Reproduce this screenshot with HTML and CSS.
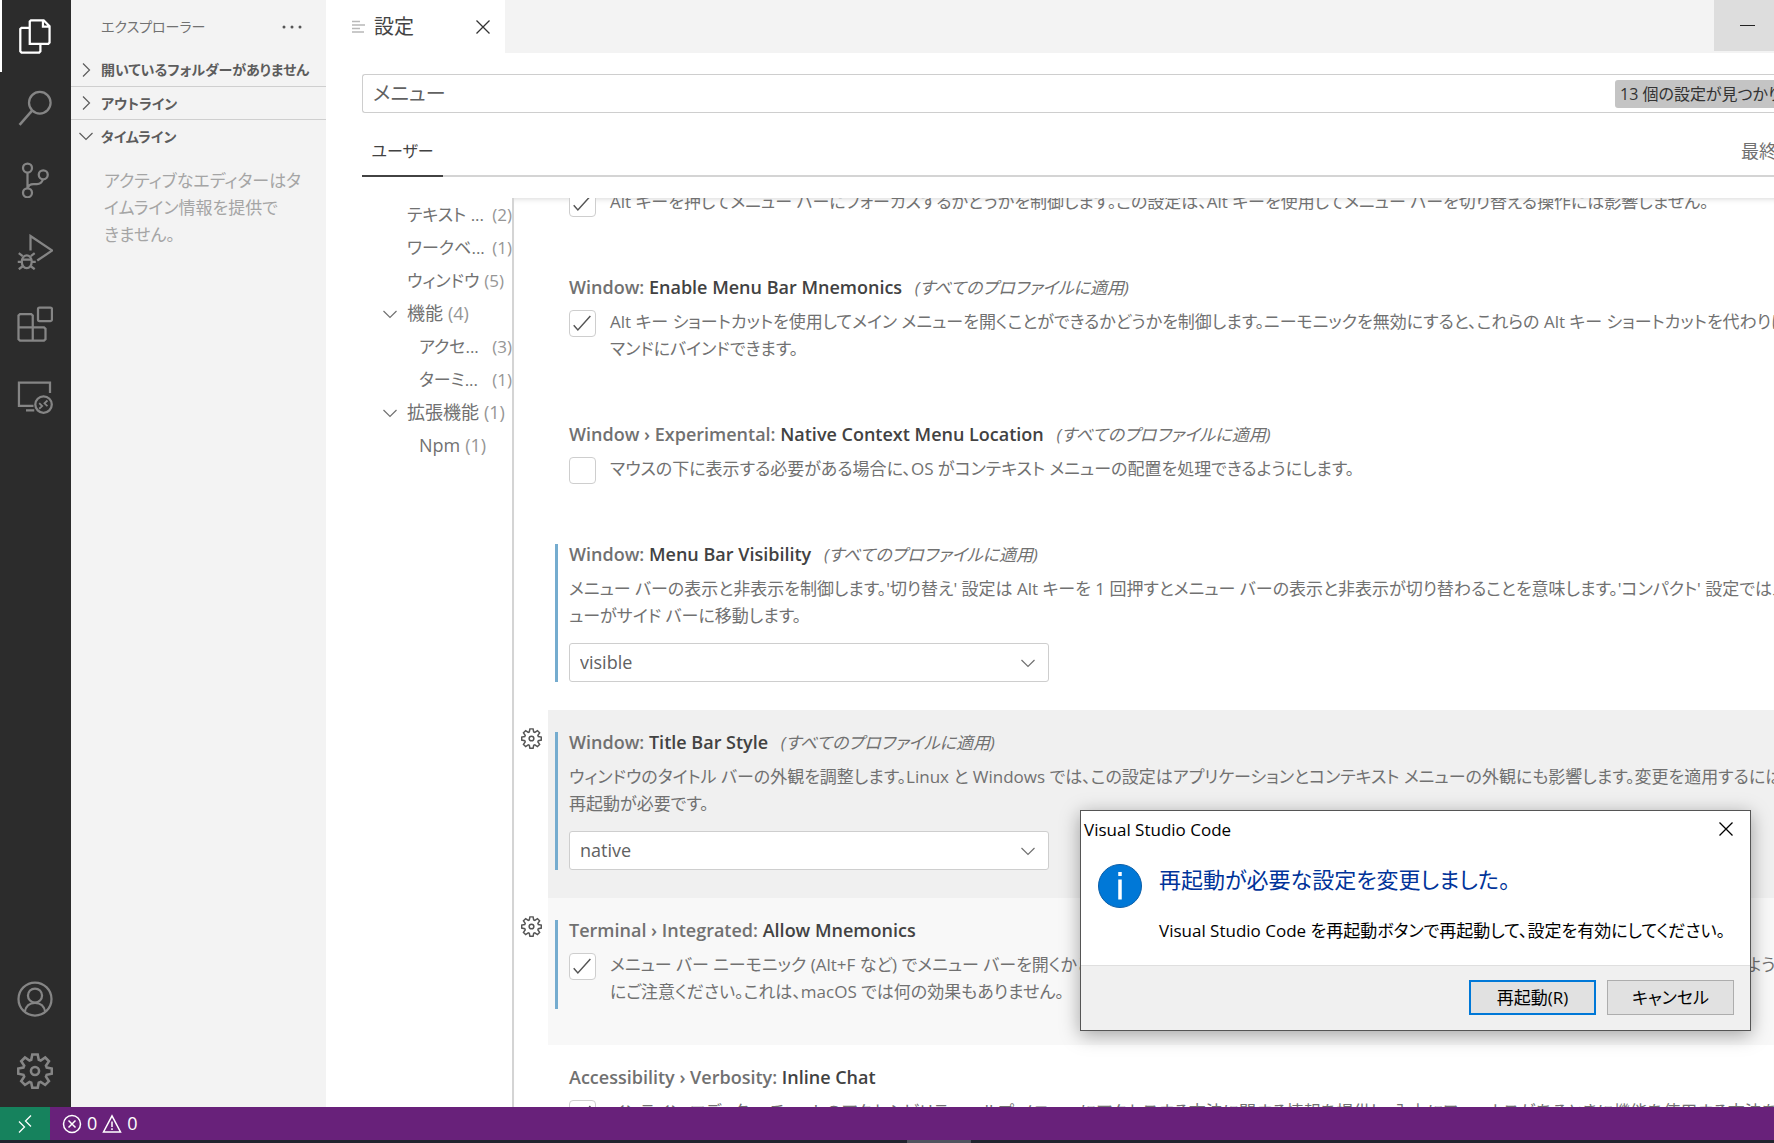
FILE: index.html
```html
<!DOCTYPE html>
<html lang="ja">
<head>
	<title>設定 - Visual Studio Code</title>
	<meta charset="UTF-8">
	<link rel="stylesheet" href="styles.css">
</head>
<body>
	<!-- 共通アイコン -->
	<svg class="defs">
		<symbol id="down" viewBox="0 0 16 16"><path d="M1.5 5 8 11.5 14.5 5" fill="none" stroke="currentColor" stroke-width="1.2"/></symbol>
		<symbol id="right" viewBox="0 0 16 16"><path d="M5 1.5 11.5 8 5 14.5" fill="none" stroke="currentColor" stroke-width="1.2"/></symbol>
		<symbol id="close" viewBox="0 0 16 16"><path d="M1.5 1.5 14.5 14.5M14.5 1.5 1.5 14.5" fill="none" stroke="currentColor" stroke-width="1.3"/></symbol>
		<symbol id="gear" viewBox="0 0 24 24"><path d="M10.2 1h3.6l.7 3.5 1.3.5 3-2 2.5 2.5-2 3 .5 1.2 3.4.7v3.4l-3.4.7-.5 1.3 2 3-2.5 2.5-3-2-1.3.5-.7 3.4h-3.6l-.7-3.4-1.2-.5-3 2-2.5-2.5 2-3-.5-1.3-3.5-.7v-3.4l3.5-.7.5-1.2-2-3 2.5-2.5 3 2 1.2-.5z" fill="none" stroke="currentColor" stroke-width="1.7"/><circle cx="12" cy="12" r="2.7" fill="none" stroke="currentColor" stroke-width="1.7"/></symbol>
	</svg>
	<div class="window">
		<div class="main">
			<nav class="activity">
				<button class="act on" aria-label="エクスプローラー"><svg viewBox="0 0 24 24"><path d="M8.5 17.2V2.3L9.3 1.5h8.5L21.7 5.4v11l-.8.8H9.3zM17.3 1.5v4.3h4.4M8.5 6.5H3l-.8.8v14.9l.8.8h11.8l.8-.8v-5" fill="none" stroke="currentColor" stroke-width="1.5"/></svg></button>
				<button class="act" aria-label="検索"><svg viewBox="0 0 24 24"><circle cx="15.2" cy="8.5" r="7.2" fill="none" stroke="currentColor" stroke-width="1.5"/><path d="M10.2 13.6 1.7 23.3" fill="none" stroke="currentColor" stroke-width="1.7"/></svg></button>
				<button class="act" aria-label="ソース管理"><svg viewBox="0 0 24 24"><g fill="none" stroke="currentColor" stroke-width="1.5"><circle cx="7" cy="4" r="3"/><circle cx="17.5" cy="8.5" r="3"/><circle cx="7" cy="20.5" r="3"/><path d="M7 7v10.5M17.3 11.5c-.6 2-2 3.2-4 3.2H11c-2 0-3.5 1-4 2.8"/></g></svg></button>
				<button class="act" aria-label="実行とデバッグ"><svg viewBox="0 0 24 24"><g fill="none" stroke="currentColor" stroke-width="1.5"><path d="M9 11V1.3L23.5 11 13.5 17.7"/><ellipse cx="6.5" cy="18.5" rx="3.3" ry="4.3"/><path d="M3.5 17h6M3.8 14.8 1.2 12.8M9.2 14.8l2.6-2M.5 18.5h2.7M9.8 18.5h2.7M3.8 21.5l-2.6 2M9.2 21.5l2.6 2"/></g></svg></button>
				<button class="act" aria-label="拡張機能"><svg viewBox="0 0 24 24"><g fill="none" stroke="currentColor" stroke-width="1.5"><rect x="14" y="1" width="9.3" height="9" rx="1"/><path d="M10.5 14.3V6.3l-1-.9H2l-1 .9v15.8l1 .9h16l1-.9V15.2l-1-.9H1M10.5 14.3V23"/></g></svg></button>
				<button class="act" aria-label="リモート エクスプローラー"><svg viewBox="0 0 24 24"><g fill="none" stroke="currentColor" stroke-width="1.5"><path d="M22 10V3H1.3v15.5H11M6 21.5h5.5"/><circle cx="17.7" cy="17.7" r="5.5"/><path d="M14.8 16.8l2 1.9-2 1.8M20.3 15l-2 1.9 2 1.9" stroke-width="1.2"/></g></svg></button>
				<button class="act bottom" aria-label="アカウント"><svg viewBox="0 0 24 24"><g fill="none" stroke="currentColor" stroke-width="1.5"><circle cx="12" cy="12" r="11"/><circle cx="12" cy="9.7" r="4.7"/><path d="M5.2 20.5c.6-3.8 3.3-6 6.8-6s6.2 2.2 6.8 6"/></g></svg></button>
				<button class="act" aria-label="管理"><svg><use href="#gear"/></svg></button>
			</nav>
			<aside class="sidebar">
				<div class="side-title"><span>エクスプローラー</span><button aria-label="その他の操作"><svg viewBox="0 0 20 4"><circle cx="2" cy="2" r="1.5"/><circle cx="10" cy="2" r="1.5"/><circle cx="18" cy="2" r="1.5"/></svg></button></div>
				<button class="pane"><svg><use href="#right"/></svg>開いているフォルダーがありません</button>
				<button class="pane"><svg><use href="#right"/></svg>アウトライン</button>
				<button class="pane"><svg><use href="#down"/></svg>タイムライン</button>
				<p>アクティブなエディターはタ<br>イムライン情報を提供で<br>きません。</p>
			</aside>
			<main class="editor">
				<div class="tabs">
					<div class="tab">
						<svg class="tab-icon" viewBox="0 0 13 14"><path d="M0 1.5h8M0 5h13M0 8.5h8M0 12h12" stroke="#b8b8b8" stroke-width="1.5"/></svg>
						<span>設定</span>
						<button aria-label="閉じる"><svg><use href="#close"/></svg></button>
					</div>
					<button class="minimize" aria-label="最小化"></button>
				</div>
				<div class="search">
					<input type="text" value="メニュー" aria-label="設定の検索">
					<span class="found">13 個の設定が見つかりました</span>
				</div>
				<div class="scope">
					<button>ユーザー</button>
					<span>最終同期</span>
				</div>
				<div class="body">
					<ul class="toc">
						<li class="cut"><span>テキスト ...</span><i>(2)</i></li>
						<li class="cut"><span>ワークベ...</span><i>(1)</i></li>
						<li class="kana">ウィンドウ<i>(5)</i></li>
						<li><svg><use href="#down"/></svg>機能<i>(4)</i></li>
						<li class="sub cut"><span>アクセ...</span><i>(3)</i></li>
						<li class="sub cut"><span>ターミ...</span><i>(1)</i></li>
						<li><svg><use href="#down"/></svg>拡張機能<i>(1)</i></li>
						<li class="sub">Npm<i>(1)</i></li>
					</ul>
					<div class="list">
						<section class="setting">
							<div class="gear"></div>
							<div class="item"><div class="content">
								<h3>Window: <b>Custom Menu Bar Alt Focus</b> <em>(すべてのプロファイルに適用)</em></h3>
								<div class="check"><input type="checkbox" id="c1" checked><label for="c1">Alt キーを押してメニュー バーにフォーカスするかどうかを制御します。この設定は、Alt キーを使用してメニュー バーを切り替える操作には影響しません。</label></div>
							</div></div>
						</section>
						<section class="setting">
							<div class="gear"></div>
							<div class="item"><div class="content">
								<h3>Window: <b>Enable Menu Bar Mnemonics</b> <em>(すべてのプロファイルに適用)</em></h3>
								<div class="check"><input type="checkbox" id="c2" checked><label for="c2">Alt キー ショートカットを使用してメイン メニューを開くことができるかどうかを制御します。ニーモニックを無効にすると、これらの Alt キー ショートカットを代わりにエディター コ<br>マンドにバインドできます。</label></div>
							</div></div>
						</section>
						<section class="setting">
							<div class="gear"></div>
							<div class="item"><div class="content">
								<h3>Window › Experimental: <b>Native Context Menu Location</b> <em>(すべてのプロファイルに適用)</em></h3>
								<div class="check"><input type="checkbox" id="c3"><label for="c3">マウスの下に表示する必要がある場合に、OS がコンテキスト メニューの配置を処理できるようにします。</label></div>
							</div></div>
						</section>
						<section class="setting changed">
							<div class="gear"></div>
							<div class="item"><div class="content">
								<h3>Window: <b>Menu Bar Visibility</b> <em>(すべてのプロファイルに適用)</em></h3>
								<label for="s1">メニュー バーの表示と非表示を制御します。'切り替え' 設定は Alt キーを 1 回押すとメニュー バーの表示と非表示が切り替わることを意味します。'コンパクト' 設定ではメニ<br>ューがサイド バーに移動します。</label>
								<div class="select"><select id="s1"><option>visible</option></select><svg><use href="#down"/></svg></div>
							</div></div>
						</section>
						<section class="setting changed focused">
							<button class="gear" aria-label="その他の操作"><svg><use href="#gear"/></svg></button>
							<div class="item"><div class="content">
								<h3>Window: <b>Title Bar Style</b> <em>(すべてのプロファイルに適用)</em></h3>
								<label for="s2">ウィンドウのタイトル バーの外観を調整します。Linux と Windows では、この設定はアプリケーションとコンテキスト メニューの外観にも影響します。変更を適用するには完全な<br>再起動が必要です。</label>
								<div class="select"><select id="s2"><option>native</option></select><svg><use href="#down"/></svg></div>
							</div></div>
						</section>
						<section class="setting changed hovered">
							<button class="gear" aria-label="その他の操作"><svg><use href="#gear"/></svg></button>
							<div class="item"><div class="content">
								<h3>Terminal › Integrated: <b>Allow Mnemonics</b></h3>
								<div class="check"><input type="checkbox" id="c4" checked><label for="c4">メニュー バー ニーモニック (Alt+F など) でメニュー バーを開くかどうかを指定します。true の場合にのみ、すべての Alt キー ストロークがシェルをスキップするよう<br>にご注意ください。これは、macOS では何の効果もありません。</label></div>
							</div></div>
						</section>
						<section class="setting">
							<div class="gear"></div>
							<div class="item"><div class="content">
								<h3>Accessibility › Verbosity: <b>Inline Chat</b></h3>
								<div class="check"><input type="checkbox" id="c5" checked><label for="c5">インライン エディター チャットのアクセシビリティ ヘルプ メニューにアクセスする方法に関する情報を提供し、入力にフォーカスがあるときに機能を使用する方法を説明</label></div>
							</div></div>
						</section>
					</div>
				</div>
			</main>
		</div>
		<footer class="status">
			<button class="remote" aria-label="リモート ウィンドウを開く"><svg viewBox="0 0 16 20"><path d="M2 7.5 7.5 13 2 18.5M14 1.5 8.5 7l5.5 5.5" fill="none" stroke="#fff" stroke-width="1.3"/></svg></button>
			<button class="problems"><svg viewBox="0 0 20 20"><circle cx="10" cy="10" r="8.5"/><path d="M6.5 6.5l7 7M13.5 6.5l-7 7"/></svg>0<svg viewBox="0 0 20 20"><path d="M10 1.8 18.5 18h-17zM10 7.5v5.5M10 14.3v1.7"/></svg>0</button>
		</footer>
		<div class="taskbar"><div></div></div>
	</div>
	<div class="dialog" role="dialog" aria-labelledby="dlg-title">
		<div class="dlg-bar"><span>Visual Studio Code</span><button aria-label="閉じる"><svg><use href="#close"/></svg></button></div>
		<div class="dlg-body">
			<svg viewBox="0 0 44 44"><circle cx="22" cy="22" r="21.5" fill="#0078d7" stroke="#0a5ea8"/><path d="M22 8v4M22 15.5v20" stroke="#fff" stroke-width="3.5"/></svg>
			<div>
				<h2 id="dlg-title">再起動が必要な設定を変更しました。</h2>
				<p>Visual Studio Code を再起動ボタンで再起動して、設定を有効にしてください。</p>
			</div>
		</div>
		<div class="dlg-foot">
			<button class="primary">再起動(R)</button>
			<button>キャンセル</button>
		</div>
	</div>
</body>
</html>
```
FILE: styles.css
```css
*{
	margin: 0;
	padding: 0;
	box-sizing: border-box;
}
body{
	height: 100vh;
	overflow: hidden;
	position: relative;
	font: 18px/27px "Open Sans", "Noto Sans CJK JP", sans-serif;
	font-feature-settings: "palt";
	color: #717171;
	background: #fff;
}
button,input,select{
	font: inherit;
	font-feature-settings: inherit;
	color: inherit;
	border: none;
	background: none;
}
ul{
	list-style: none;
}
svg{
	display: block;
	flex: none;
	width: 16px;
	height: 16px;
}
.defs{
	position: absolute;
	width: 0;
	height: 0;
}
.window{
	height: 100%;
	display: flex;
	flex-direction: column;
}
.main{
	flex: 1;
	min-height: 0;
	display: flex;
}
/* アクティビティ バー */
.activity{
	width: 71px;
	flex: none;
	display: flex;
	flex-direction: column;
	background: #2c2c2c;
}
.act{
	height: 72px;
	padding-left: 15px;
	border-left: 2px solid transparent;
	color: #858585;
}
.act svg{
	width: 36px;
	height: 36px;
}
.act.on{
	color: #fff;
	border-color: #fff;
}
.act.bottom{
	margin-top: auto;
}
/* サイド バー */
.sidebar{
	width: 255px;
	flex: none;
	background: #f3f3f3;
	overflow: hidden;
}
.side-title{
	height: 53px;
	padding: 0 24px 0 30px;
	display: flex;
	align-items: center;
	justify-content: space-between;
	font-size: 14px;
}
.side-title svg{
	width: 20px;
	height: 4px;
	fill: #555;
}
.pane{
	width: 100%;
	height: 33px;
	padding-left: 7px;
	display: flex;
	align-items: center;
	gap: 7px;
	font-size: 14px;
	font-weight: bold;
	color: #5c5c5c;
	white-space: nowrap;
}
.pane + .pane{
	border-top: 1px solid #cfcfcf;
}
.sidebar p{
	padding: 15px 0 0 33px;
	font-size: 17px;
	color: #a5a5a5;
	white-space: nowrap;
}
/* エディター */
.editor{
	flex: 1;
	min-width: 0;
	display: flex;
	flex-direction: column;
}
.tabs{
	height: 53px;
	flex: none;
	display: flex;
	justify-content: space-between;
	align-items: flex-start;
	background: #f3f3f3;
}
.tab{
	width: 179px;
	height: 53px;
	padding: 0 14px 0 26px;
	display: flex;
	align-items: center;
	gap: 9px;
	background: #fff;
	color: #444;
	font-size: 20px;
}
.tab-icon{
	width: 13px;
	height: 14px;
}
.tab button{
	margin-left: auto;
	color: #333;
}
.minimize{
	width: 60px;
	height: 51px;
	display: flex;
	align-items: center;
	padding-left: 26px;
	background: #ddd;
}
.minimize::before{
	content: "";
	width: 15px;
	height: 1px;
	background: #222;
}
.search{
	height: 39px;
	margin: 21px 0 0 36px;
	flex: none;
	display: flex;
	align-items: center;
	border: 1px solid #cecece;
	border-right: none;
	border-radius: 3px 0 0 3px;
}
.search input{
	flex: 1;
	min-width: 0;
	padding-left: 10px;
	outline: none;
	color: #616161;
	font-size: 20px;
}
.found{
	width: 159px;
	height: 28px;
	padding-left: 5px;
	overflow: hidden;
	white-space: nowrap;
	font-size: 16px;
	line-height: 28px;
	color: #333;
	background: #c4c4c4;
	border-radius: 3px 0 0 3px;
}
.scope{
	height: 64px;
	margin-left: 36px;
	flex: none;
	display: flex;
	justify-content: space-between;
	overflow: hidden;
	box-shadow: inset 0 -2px #d4d4d4;
}
.scope button{
	width: 81px;
	height: 64px;
	padding-top: 14px;
	border-bottom: 2px solid #424242;
	color: #424242;
	font-size: 16px;
}
.scope span{
	width: 33px;
	padding-top: 25px;
	white-space: nowrap;
}
.body{
	flex: 1;
	min-height: 0;
	margin-top: 21px;
	display: flex;
}
.toc{
	width: 188px;
	flex: none;
	border-right: 2px solid #d4d4d4;
}
.toc li{
	height: 33px;
	padding-left: 81px;
	display: flex;
	align-items: center;
	gap: 5px;
	white-space: nowrap;
}
.toc li.sub{
	padding-left: 93px;
}
.toc li.cut,.toc li.kana{
	font-size: 17px;
}
.toc li.cut{
	gap: 0;
}
.toc span{
	flex: 1;
}
.toc i{
	font-style: normal;
	color: #969696;
}
.toc svg{
	margin: 0 4px 0 -25px;
}
.list{
	flex: 1;
	min-width: 0;
	overflow: hidden;
	box-shadow: inset 0 6px 6px -6px #ccc;
}
.setting{
	display: flex;
}
/* スクロール位置 */
.setting:first-child{
	margin-top: -63px;
}
.gear{
	width: 34px;
	flex: none;
	padding: 18px 0 0 7px;
	align-self: flex-start;
	color: #555;
}
.gear svg{
	width: 21px;
	height: 21px;
}
.item{
	flex: 1;
	min-width: 0;
	padding: 22px 0 28px 7px;
	overflow: hidden;
}
.focused .item{
	background: #f0f0f0;
}
.hovered .item{
	background: #f8f8f8;
}
.content{
	padding-left: 11px;
	border-left: 3px solid transparent;
	white-space: nowrap;
}
.changed .content{
	border-color: #75accf;
}
h3{
	height: 20px;
	margin-bottom: 11px;
	font-size: 18px;
	line-height: 20px;
	font-weight: 600;
}
h3 b{
	font-weight: 600;
	color: #424242;
}
h3 em{
	margin-left: 8px;
	font-size: 17px;
	font-weight: normal;
}
.content label{
	display: block;
	font-size: 17px;
}
.check{
	display: flex;
	align-items: flex-start;
	gap: 14px;
	padding-bottom: 4px;
	margin-bottom: 8px;
}
.changed .check{
	margin-bottom: 0;
}
.changed:has(.check) .item{
	padding-bottom: 36px;
}
.check input{
	appearance: none;
	width: 27px;
	height: 27px;
	margin: 2px 0 -2px;
	flex: none;
	border: 1px solid #cecece;
	border-radius: 4px;
	background: #fff;
}
.check input:checked{
	background: #fff url("data:image/svg+xml,%3Csvg xmlns='http://www.w3.org/2000/svg' viewBox='0 0 27 27'%3E%3Cpath d='M4 15.5 8.5 20.5 22 5.5' fill='none' stroke='%23555' stroke-width='1.6'/%3E%3C/svg%3E");
}
.select{
	width: 480px;
	height: 39px;
	margin-top: 14px;
	display: grid;
	align-items: center;
}
.select select,.select svg{
	grid-area: 1 / 1;
}
.select select{
	appearance: none;
	height: 39px;
	padding: 0 10px;
	border: 1px solid #cecece;
	border-radius: 3px;
	background: #fff;
	color: #616161;
}
.select svg{
	justify-self: end;
	margin-right: 13px;
	pointer-events: none;
}
/* ステータス バー */
.status{
	height: 33px;
	flex: none;
	display: flex;
	background: #68217a;
	color: #fff;
}
.remote{
	width: 50px;
	padding-left: 17px;
	background: #16825d;
}
.remote svg{
	height: 20px;
}
.problems{
	padding-left: 12px;
	display: flex;
	align-items: center;
	gap: 5px;
}
.problems svg{
	width: 20px;
	height: 20px;
	fill: none;
	stroke: #fff;
	stroke-width: 1.5;
}
.taskbar{
	height: 3px;
	flex: none;
	display: flex;
	justify-content: center;
	background: #20242e;
}
.taskbar div{
	width: 64px;
	margin-left: 104px;
	background: #50545e;
}
/* ダイアログ */
.dialog{
	position: absolute;
	right: 23px;
	bottom: 112px;
	width: 671px;
	background: #fff;
	border: 1px solid #555;
	box-shadow: 0 4px 18px rgba(0,0,0,.35);
	color: #000;
	font-size: 17px;
}
.dlg-bar{
	height: 36px;
	padding: 0 16px 0 3px;
	display: flex;
	align-items: center;
	justify-content: space-between;
}
.dlg-body{
	height: 118px;
	padding: 17px 0 0 17px;
	display: flex;
	gap: 17px;
	white-space: nowrap;
}
.dlg-body svg{
	width: 44px;
	height: 44px;
}
.dlg-body h2{
	margin-bottom: 23px;
	font-size: 22px;
	line-height: 30px;
	font-weight: normal;
	color: #039;
}
.dlg-foot{
	height: 65px;
	padding: 14px 16px 0 0;
	display: flex;
	justify-content: flex-end;
	gap: 11px;
	background: #f0f0f0;
	border-top: 1px solid #dfdfdf;
}
.dlg-foot button{
	width: 127px;
	height: 35px;
	background: #e1e1e1;
	border: 1px solid #adadad;
}
.dlg-foot .primary{
	border: 2px solid #0078d7;
}
```
